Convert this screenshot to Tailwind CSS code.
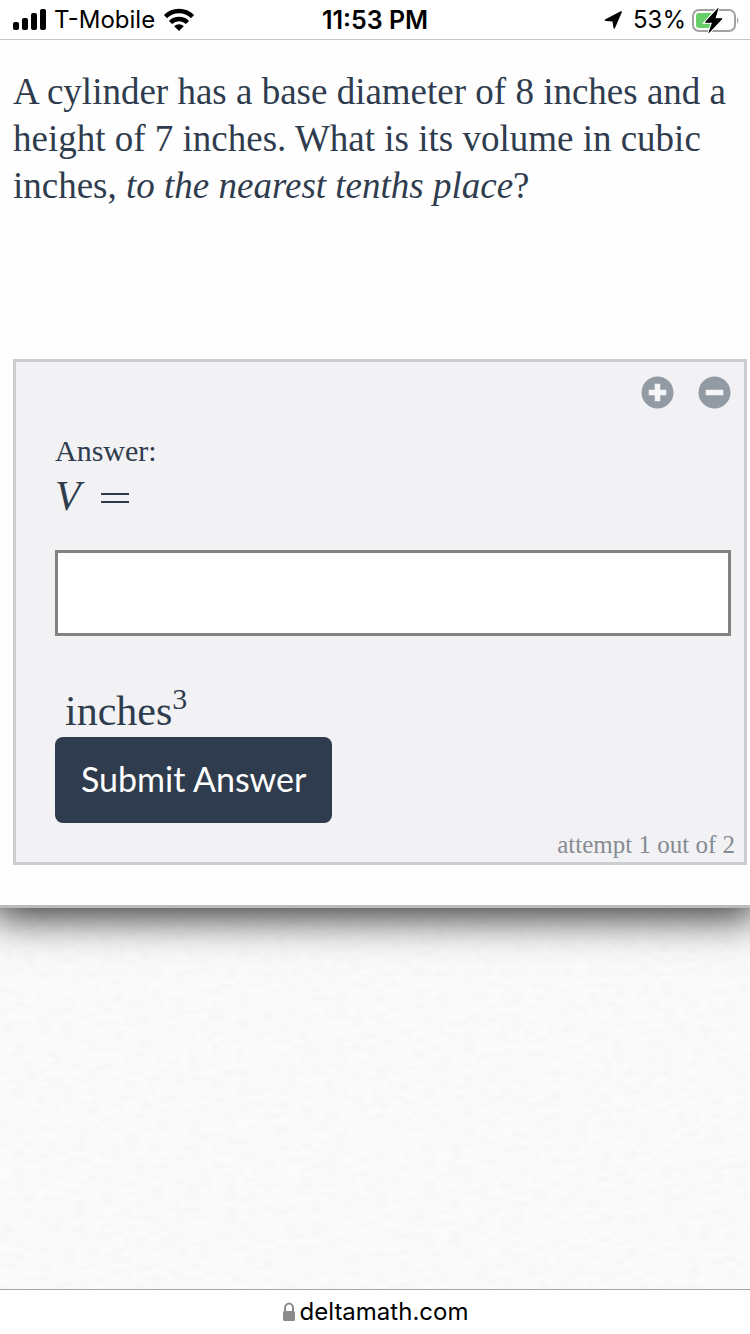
<!DOCTYPE html>
<html lang="en">
<head>
    <meta charset="UTF-8">
    <meta name="viewport" content="width=device-width, initial-scale=1.0">
    <title>DeltaMath</title>
    <script src="https://cdn.jsdelivr.net/npm/@tailwindcss/browser@4"></script>
</head>
<body class="flex flex-col min-h-screen bg-white font-['Liberation_Serif',serif] text-[#2f3c4e]">

    <!-- Status bar -->
    <header class="relative z-20 grid grid-cols-3 items-center h-10 px-3 border-b border-[#c4c4c6] bg-white font-['Inter',sans-serif] text-[24px] leading-8 text-black">
        <div class="flex items-center">
            <svg class="w-9 h-6" viewBox="0 0 36 24" aria-hidden="true">
                <rect x="1" y="14" width="6" height="8" rx="2"/>
                <rect x="10" y="10" width="6" height="12" rx="2"/>
                <rect x="19" y="5" width="6" height="17" rx="2"/>
                <rect x="28" y="1" width="6" height="21" rx="2"/>
            </svg>
            <span class="ml-1.5">T-Mobile</span>
            <svg class="w-8 h-6 ml-2" viewBox="0 0 32 24" fill="none" stroke="#000" stroke-width="4.500" aria-hidden="true">
                <path d="M2.500 8.600a19 19 0 0 1 27 0"/>
                <path d="M7.500 14.500a12 12 0 0 1 17 0"/>
                <path d="M16 23l-4.800-4.800a6.800 6.800 0 0 1 9.600 0z" fill="#000" stroke="none"/>
            </svg>
        </div>
        <div class="text-center text-[25px] font-semibold">11:53 PM</div>
        <div class="flex items-center justify-end">
            <svg class="w-5 h-5 mr-2.5" viewBox="0 0 20 20" aria-hidden="true">
                <path d="M18.800 2.200L12 18q-.9 1.600-1.500 0L9.500 11.500 3 11q-2.500-.5-.5-1.800L17.200 1.500q2-.8 1.600.7z"/>
            </svg>
            <span>53%</span>
            <svg class="w-12 h-7 ml-1.5 -mr-0.5" viewBox="0 0 48 28" aria-hidden="true">
                <rect x="1" y="4" width="42" height="21" rx="6" fill="#fff" stroke="#a2a2a5" stroke-width="2"/>
                <path d="M45 11q3 3.500 0 7z" fill="#a2a2a5"/>
                <rect x="4" y="7" width="19" height="15" rx="3" fill="#68ce67"/>
                <path d="M26 2.500L13.500 16.200h7.200L17 26.500 30 12.800h-7.200z" fill="#000" stroke="#fff" stroke-width="3" paint-order="stroke"/>
                <path d="M26 2.500L13.500 16.200h7.200L17 26.500 30 12.800h-7.200z" fill="#000" stroke="#000" stroke-width="1" stroke-linejoin="round"/>
            </svg>
        </div>
    </header>

    <!-- Problem card -->
    <main class="relative z-10 border-b-3 border-[#bbbbbb] bg-[#fefefe] pl-[13px] pr-[3px] pt-7 pb-10 shadow-[0_0_40px_8px_rgba(0,0,0,0.85)]">
        <p class="min-h-[291px] text-[37px] leading-[47px]">A cylinder has a base diameter of 8 inches and a height of 7 inches. What is its volume in cubic inches, <em>to the nearest tenths place</em>?</p>

        <form class="border-3 border-[#cbcdd1] bg-[#f2f2f4] pl-[39px] pr-[13px]" onsubmit="return false">
            <div class="flex justify-end gap-6 pt-3.5">
                <button type="button" aria-label="Zoom in" class="w-[33px] h-[33px]">
                    <svg viewBox="0 0 33 33">
                        <circle cx="16.500" cy="16.500" r="16" fill="#929aa3"/>
                        <path d="M10.500 16.500h12M16.500 10.500v12" stroke="#f6f6f8" stroke-width="5.500" stroke-linecap="square"/>
                    </svg>
                </button>
                <button type="button" aria-label="Zoom out" class="w-[33px] h-[33px]">
                    <svg viewBox="0 0 33 33">
                        <circle cx="16.500" cy="16.500" r="16" fill="#929aa3"/>
                        <path d="M10.500 16.500h12" stroke="#f6f6f8" stroke-width="5.500" stroke-linecap="square"/>
                    </svg>
                </button>
            </div>

            <p class="mt-[22px] text-[30px] leading-10">Answer:</p>
            <label for="volume" class="flex items-center gap-5 text-[42px] leading-[50px]">
                <i>V</i>
                <svg class="w-7 h-3 mt-1" viewBox="0 0 28 12" stroke="#2f3c4e" stroke-width="2" role="img" aria-label="equals">
                    <path d="M0 2h28M0 10h28"/>
                </svg>
            </label>
            <input id="volume" type="text" class="block w-full h-[86px] mt-[29px] px-4 border-3 border-[#828282] bg-white text-[37px] outline-none">
            <p class="mt-[50px] pl-2.5 text-[42px] leading-[51px]">inches<sup class="-top-4 text-[30px]">3</sup></p>
            <button type="submit" class="block h-[86px] px-[26px] pb-1 rounded-lg bg-[#2f3c4e] font-['Lato',sans-serif] text-[34px] text-white">Submit Answer</button>
            <p class="mt-1 -mr-1 text-right text-[25px] leading-[35px] text-[#858b93]">attempt 1 out of 2</p>
        </form>
    </main>

    <!-- Paper texture behind the card -->
    <div class="relative flex-1 overflow-hidden bg-[#fbfbfb]">
        <svg class="absolute inset-0 w-full h-full" aria-hidden="true">
            <filter id="paper">
                <feTurbulence type="fractalNoise" baseFrequency="0.08 0.16" numOctaves="2" seed="4"/>
                <feColorMatrix values="0 0 0 0 0.6  0 0 0 0 0.6  0 0 0 0 0.6  0.2 0 0 0 -0.07"/>
            </filter>
            <rect width="100%" height="100%" filter="url(#paper)"/>
        </svg>
    </div>

    <!-- Address bar -->
    <footer class="relative z-20 flex items-center justify-center gap-1 h-[45px] border-t border-[#a5a5a7] bg-white font-['Inter',sans-serif] text-[24px] text-black">
        <svg class="w-3.5 h-5" viewBox="0 0 14 20" aria-hidden="true">
            <path d="M3 10V6a4 4.500 0 0 1 8 0v4" fill="none" stroke="#8a8a8d" stroke-width="2"/>
            <rect x="1" y="9" width="12" height="10" rx="1.500" fill="#8a8a8d"/>
        </svg>
        <a href="#" class="leading-8">deltamath.com</a>
    </footer>

</body>
</html>
